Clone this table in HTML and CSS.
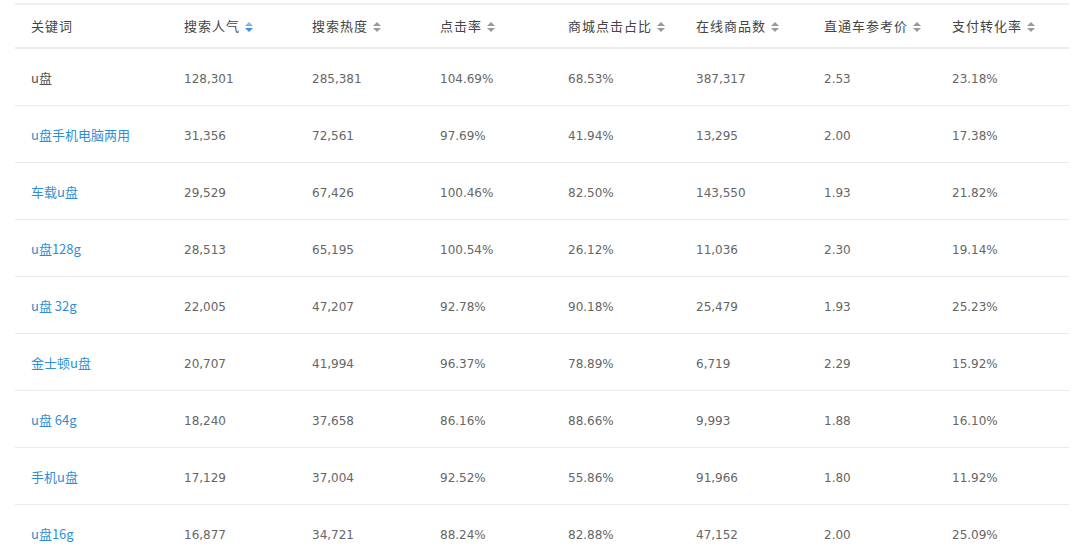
FILE: index.html
```html
<!DOCTYPE html>
<html lang="zh">
<head>
<meta charset="utf-8">
<link rel="stylesheet" href="styles.css">
</head>
<body>
<div class="wrap">
<table class="kw">
  <colgroup>
    <col class="c1"><col class="cn"><col class="cn"><col class="cn"><col class="cn"><col class="cn"><col class="cn"><col class="cl">
  </colgroup>
  <thead>
    <tr>
      <th>关键词</th>
      <th>搜索人气<span class="sort active"></span></th>
      <th>搜索热度<span class="sort"></span></th>
      <th>点击率<span class="sort"></span></th>
      <th>商城点击占比<span class="sort"></span></th>
      <th>在线商品数<span class="sort"></span></th>
      <th>直通车参考价<span class="sort"></span></th>
      <th>支付转化率<span class="sort"></span></th>
    </tr>
  </thead>
  <tbody>
    <tr><td class="plain">u盘</td><td>128,301</td><td>285,381</td><td>104.69%</td><td>68.53%</td><td>387,317</td><td>2.53</td><td>23.18%</td></tr>
    <tr><td class="link">u盘手机电脑两用</td><td>31,356</td><td>72,561</td><td>97.69%</td><td>41.94%</td><td>13,295</td><td>2.00</td><td>17.38%</td></tr>
    <tr><td class="link">车载u盘</td><td>29,529</td><td>67,426</td><td>100.46%</td><td>82.50%</td><td>143,550</td><td>1.93</td><td>21.82%</td></tr>
    <tr><td class="link">u盘128g</td><td>28,513</td><td>65,195</td><td>100.54%</td><td>26.12%</td><td>11,036</td><td>2.30</td><td>19.14%</td></tr>
    <tr><td class="link">u盘 32g</td><td>22,005</td><td>47,207</td><td>92.78%</td><td>90.18%</td><td>25,479</td><td>1.93</td><td>25.23%</td></tr>
    <tr><td class="link">金士顿u盘</td><td>20,707</td><td>41,994</td><td>96.37%</td><td>78.89%</td><td>6,719</td><td>2.29</td><td>15.92%</td></tr>
    <tr><td class="link">u盘 64g</td><td>18,240</td><td>37,658</td><td>86.16%</td><td>88.66%</td><td>9,993</td><td>1.88</td><td>16.10%</td></tr>
    <tr><td class="link">手机u盘</td><td>17,129</td><td>37,004</td><td>92.52%</td><td>55.86%</td><td>91,966</td><td>1.80</td><td>11.92%</td></tr>
    <tr><td class="link">u盘16g</td><td>16,877</td><td>34,721</td><td>88.24%</td><td>82.88%</td><td>47,152</td><td>2.00</td><td>25.09%</td></tr>
  </tbody>
</table>
</div>
</body>
</html>
```
FILE: styles.css
```css
html, body {
  margin: 0;
  padding: 0;
  background: #ffffff;
}
.wrap {
  padding: 3px 0 0 15px;
}
.kw {
  width: 1054px;
  table-layout: fixed;
  border-collapse: collapse;
  font-family: "DejaVu Sans", "Noto Sans CJK SC", sans-serif;
  font-size: 12px;
  color: #666666;
}
.c1 { width: 153px; }
.cn { width: 128px; }
.cl { width: 133px; }
.kw thead tr {
  border-top: 2px solid #efefef;
  border-bottom: 2px solid #ececec;
}
.kw th {
  height: 40px;
  padding: 0 0 2px 16px;
  text-align: left;
  font-family: "Noto Sans CJK SC", sans-serif;
  font-weight: 400;
  font-size: 13px;
  letter-spacing: 1px;
  color: #444444;
  white-space: nowrap;
}
.kw tbody tr {
  border-bottom: 1px solid #eaeaea;
}
.kw td {
  height: 53px;
  padding: 3px 0 0 16px;
  line-height: 16px;
  text-align: left;
  white-space: nowrap;
}
.kw td.plain,
.kw td.link {
  font-family: "Noto Sans CJK SC", sans-serif;
  font-size: 13px;
  padding-top: 1px;
  height: 55px;
}
.kw td.plain { color: #555555; }
.kw td.link { color: #2f8fd4; }
.sort {
  display: inline-block;
  position: relative;
  width: 8px;
  height: 10px;
  margin-left: 5px;
  vertical-align: -1px;
}
.sort::before,
.sort::after {
  content: "";
  position: absolute;
  left: 0;
  border-left: 4px solid transparent;
  border-right: 4px solid transparent;
}
.sort::before {
  top: 0;
  border-bottom: 4px solid #999999;
}
.sort::after {
  bottom: 0;
  border-top: 4px solid #999999;
}
.sort.active::before { border-bottom-color: #8ab4e0; }
.sort.active::after { border-top-color: #3a8ee0; }
```
